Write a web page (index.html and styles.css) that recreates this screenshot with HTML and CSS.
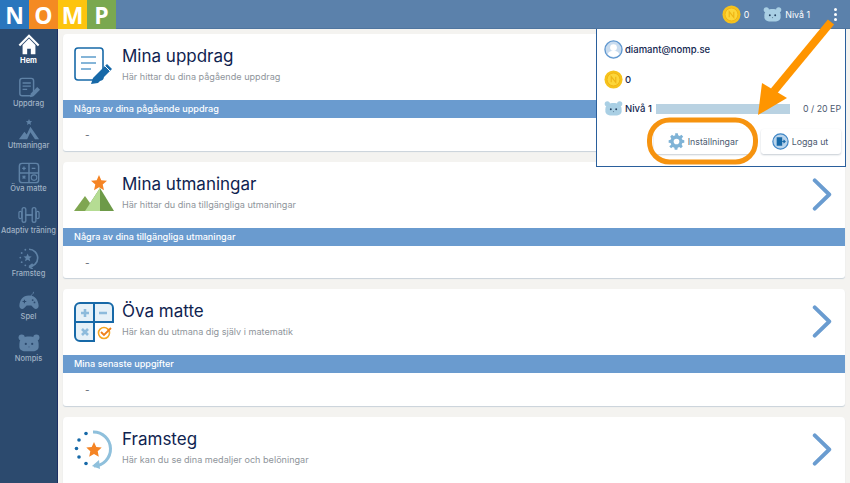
FILE: index.html
```html
<!DOCTYPE html>
<html lang="sv">
<head>
<meta charset="utf-8">
<title>NOMP</title>
<link rel="stylesheet" href="styles.css">
</head>
<body>
<svg class="defs" width="0" height="0">
  <defs>
    <g id="bear">
      <circle cx="4" cy="5" r="3.400"/><circle cx="20" cy="5" r="3.400"/>
      <path d="M1.500 12C1.500 6 7 4 12 4s10.500 2 10.500 8v3c0 3-3 5-6 5h-9c-3 0-6-2-6-5z"/>
    </g>
    <g id="coin">
      <circle cx="10" cy="10" r="9.500" fill="#f6c21c"/>
      <circle cx="10" cy="10" r="6.800" fill="#fcd63a" stroke="#f0b312" stroke-width="1"/>
      <path d="M7.600 13V7l4.800 6V7" fill="none" stroke="#efb515" stroke-width="1.200"/>
    </g>
  </defs>
</svg>
<header class="topbar">
  <div class="logo">
    <span class="logo-n">N</span><span class="logo-o">O</span><span class="logo-m">M</span><span class="logo-p">P</span>
  </div>
  <div class="top-right">
    <svg class="top-coin" viewBox="0 0 20 20"><use href="#coin"/></svg>
    <span class="top-count">0</span>
    <svg class="top-bear" viewBox="0 0 24 22"><use href="#bear" fill="#a9cfe4"/><circle cx="8.500" cy="12" r="1.200" fill="#24405f"/><circle cx="15.500" cy="12" r="1.200" fill="#24405f"/><path d="M11 15h2l-1 1z" fill="#24405f"/></svg>
    <span class="top-level">Nivå 1</span>
    <span class="dots"><i></i><i></i><i></i></span>
  </div>
</header>
<div class="frame">
  <nav class="sidebar">
    <a class="nav-item nav-active">
      <svg class="nav-icon" viewBox="0 0 24 24"><path d="M1.500 12.500 12 2l10.500 10.500" fill="none" stroke="#fff" stroke-width="2.400"/><path d="M5 12 12 5l7 7v10h-5v-6h-4v6H5z" fill="#fff"/></svg>
      <span>Hem</span>
    </a>
    <a class="nav-item">
      <svg class="nav-icon" viewBox="0 0 24 24"><rect x="2" y="1.500" width="15" height="19" rx="2.500" fill="none" stroke="#5f82a6" stroke-width="1.600"/><path d="M5 6.500h9M5 10h9M5 13.500h5" stroke="#5f82a6" stroke-width="1.500"/><path d="m13 22 1-4 7-7 3 3-7 7z" fill="#5f82a6"/></svg>
      <span>Uppdrag</span>
    </a>
    <a class="nav-item">
      <svg class="nav-icon" viewBox="0 0 24 24"><path d="m12 0 1 2.300 2.400.2-1.800 1.600.6 2.400-2.200-1.300-2.200 1.300.6-2.400-1.800-1.600 2.400-.2z" fill="#5f82a6"/><path d="m1 22 6-8 2.500 3 4-8.500 9.500 13.500h-4.500l-5-7.500-3.500 7.500z" fill="#5f82a6"/></svg>
      <span>Utmaningar</span>
    </a>
    <a class="nav-item">
      <svg class="nav-icon" viewBox="0 0 24 24"><rect x="1.500" y="1.500" width="21" height="21" rx="3" fill="none" stroke="#5f82a6" stroke-width="1.600"/><path d="M12 1.500v21M1.500 12h21" stroke="#5f82a6" stroke-width="1.600"/><path d="M4.500 7h4M6.500 5v4M15 7h4M5 15l3 3M8 15l-3 3" stroke="#5f82a6" stroke-width="1.400"/><circle cx="17.500" cy="17" r="3" fill="none" stroke="#5f82a6" stroke-width="1.200"/></svg>
      <span>Öva matte</span>
    </a>
    <a class="nav-item">
      <svg class="nav-icon" viewBox="0 0 24 24"><path d="M8 12h8" stroke="#5f82a6" stroke-width="2"/><rect x="4.500" y="4" width="4" height="16" rx="2" fill="none" stroke="#5f82a6" stroke-width="1.500"/><rect x="15.500" y="4" width="4" height="16" rx="2" fill="none" stroke="#5f82a6" stroke-width="1.500"/><rect x="1" y="8" width="3" height="8" rx="1.500" fill="none" stroke="#5f82a6" stroke-width="1.300"/><rect x="20" y="8" width="3" height="8" rx="1.500" fill="none" stroke="#5f82a6" stroke-width="1.300"/></svg>
      <span>Adaptiv träning</span>
    </a>
    <a class="nav-item">
      <svg class="nav-icon" viewBox="0 0 24 24"><path d="M12 2.500A9.500 9.500 0 0 1 12 21.500M12 21.500l4-3M12 21.500l4 2.500" fill="none" stroke="#5f82a6" stroke-width="1.800"/><path d="m10.500 7 1.300 3 3.200.3-2.400 2.100.7 3.100-2.800-1.600-2.800 1.600.7-3.100L6 10.300l3.200-.3z" fill="#5f82a6"/><g fill="#5f82a6"><circle cx="8" cy="3" r="1"/><circle cx="4" cy="6.500" r="1"/><circle cx="2.500" cy="11.500" r="1"/><circle cx="4" cy="16.500" r="1"/><circle cx="8" cy="20" r="1"/></g></svg>
      <span>Framsteg</span>
    </a>
    <a class="nav-item">
      <svg class="nav-icon" viewBox="0 0 24 24"><path d="M14 7c0-2 3-2 3-5" fill="none" stroke="#5f82a6" stroke-width="1"/><path d="M12 6C5 6 2 11 1.500 17c-.3 3 3 5 5 3l3-3h5l3 3c2 2 5.300 0 5-3C22 11 19 6 12 6z" fill="#5f82a6"/><path d="M5 12.500h4M7 10.500v4" stroke="#2c4a6e" stroke-width="1.200"/><circle cx="16" cy="11" r="1" fill="#2c4a6e"/><circle cx="18" cy="13.500" r="1" fill="#2c4a6e"/></svg>
      <span>Spel</span>
    </a>
    <a class="nav-item">
      <svg class="nav-icon" viewBox="0 0 24 22"><use href="#bear" fill="#5f82a6"/><circle cx="8.500" cy="12" r="1.200" fill="#2c4a6e"/><circle cx="15.500" cy="12" r="1.200" fill="#2c4a6e"/><path d="M11 15h2l-1 1z" fill="#2c4a6e"/></svg>
      <span>Nompis</span>
    </a>
  </nav>
  <main class="content">
    <section class="card">
      <div class="card-head">
        <svg class="card-icon" viewBox="0 0 40 40"><rect x="1" y="1" width="28" height="32" rx="3" fill="#fff" stroke="#1769a8" stroke-width="1.600"/><path d="M7 10h15M7 16h15M7 22h10" stroke="#85b5d8" stroke-width="2"/><path d="m17 37 2-6 14-14 5 5-14 14z" fill="#1769a8"/><path d="m31 19 5 5" stroke="#fff" stroke-width="1"/></svg>
        <div class="card-text">
          <h2>Mina uppdrag</h2>
          <p>Här hittar du dina pågående uppdrag</p>
        </div>
      </div>
      <div class="card-bar">Några av dina pågående uppdrag</div>
      <div class="card-body">-</div>
    </section>
    <section class="card">
      <div class="card-head">
        <svg class="card-icon" viewBox="0 0 40 40"><path d="m0 36 11-15 5 7-2 8z" fill="#7fa651"/><path d="m11 36 15-23 14 23z" fill="#6d9a48"/><path d="m11 36 15-23v23z" fill="#b5dc93"/><path d="m25 0 2.300 5.200 5.700.6-4.300 3.800 1.300 5.600-5-2.900-5 2.900 1.300-5.600L17 5.800l5.700-.6z" fill="#f58424"/></svg>
        <div class="card-text">
          <h2>Mina utmaningar</h2>
          <p>Här hittar du dina tillgängliga utmaningar</p>
        </div>
        <svg class="chevron" viewBox="0 0 20 34"><path d="m2.500 2.500 15 14.500-15 14.500" fill="none" stroke="#6a9cd0" stroke-width="4" stroke-linecap="round" stroke-linejoin="round"/></svg>
      </div>
      <div class="card-bar">Några av dina tillgängliga utmaningar</div>
      <div class="card-body">-</div>
    </section>
    <section class="card">
      <div class="card-head">
        <svg class="card-icon" viewBox="0 0 40 40"><rect x="1" y="1" width="38" height="38" rx="5" fill="#e6f1f8" stroke="#1769a8" stroke-width="2"/><path d="M20 1v38M1 20h38" stroke="#1769a8" stroke-width="2"/><rect x="21" y="21" width="19" height="19" fill="#fff"/><path d="M7 11h8M11 7v8M25 11h8M8 27l6 6M14 27l-6 6" stroke="#8dbbdc" stroke-width="2.600"/><circle cx="30" cy="31" r="5.500" fill="#fff" stroke="#f5a623" stroke-width="1.600"/><path d="m27 30 3 3 7-7" fill="none" stroke="#ef7f1a" stroke-width="1.800"/></svg>
        <div class="card-text">
          <h2>Öva matte</h2>
          <p>Här kan du utmana dig själv i matematik</p>
        </div>
        <svg class="chevron" viewBox="0 0 20 34"><path d="m2.500 2.500 15 14.500-15 14.500" fill="none" stroke="#6a9cd0" stroke-width="4" stroke-linecap="round" stroke-linejoin="round"/></svg>
      </div>
      <div class="card-bar">Mina senaste uppgifter</div>
      <div class="card-body">-</div>
    </section>
    <section class="card">
      <div class="card-head">
        <svg class="card-icon" viewBox="0 0 40 40"><path d="M19 2a17 17 0 0 1 1 34" fill="none" stroke="#8fc0dc" stroke-width="3"/><path d="m18 36 7-6 1 9z" fill="#8fc0dc"/><path d="m20 12 2.300 5 5.400.6-4 3.700 1.100 5.400-4.800-2.700-4.800 2.700 1.100-5.400-4-3.700 5.400-.6z" fill="#f58424"/><g fill="#1769a8"><circle cx="12" cy="3.500" r="1.800"/><circle cx="5" cy="10" r="1.800"/><circle cx="2.500" cy="18.500" r="1.800"/><circle cx="5" cy="27" r="1.800"/><circle cx="12" cy="33.500" r="1.800"/></g></svg>
        <div class="card-text">
          <h2>Framsteg</h2>
          <p>Här kan du se dina medaljer och belöningar</p>
        </div>
        <svg class="chevron" viewBox="0 0 20 34"><path d="m2.500 2.500 15 14.500-15 14.500" fill="none" stroke="#6a9cd0" stroke-width="4" stroke-linecap="round" stroke-linejoin="round"/></svg>
      </div>
      <div class="card-bar"></div>
    </section>
  </main>
</div>
<aside class="menu">
  <div class="menu-row">
    <svg class="menu-icon" viewBox="0 0 20 20"><circle cx="10" cy="10" r="9" fill="#c9dcef" stroke="#5f97cf" stroke-width="1.400"/><circle cx="10" cy="8" r="3.600" fill="#fff"/><path d="M3.800 15c1-3 3.500-3.800 6.200-3.800s5.200.8 6.200 3.800A8 8 0 0 1 10 18a8 8 0 0 1-6.200-3z" fill="#fff"/></svg>
    <span class="menu-label">diamant@nomp.se</span>
  </div>
  <div class="menu-row">
    <svg class="menu-icon" viewBox="0 0 20 20"><use href="#coin"/></svg>
    <span class="menu-label">0</span>
  </div>
  <div class="menu-row">
    <svg class="menu-icon menu-bear" viewBox="0 0 24 22"><use href="#bear" fill="#a9cfe4"/><circle cx="8.500" cy="12" r="1.200" fill="#24405f"/><circle cx="15.500" cy="12" r="1.200" fill="#24405f"/><path d="M11 15h2l-1 1z" fill="#24405f"/></svg>
    <span class="menu-label">Nivå 1</span>
    <span class="progress"></span>
    <span class="menu-ep">0 / 20 EP</span>
  </div>
  <div class="menu-actions">
    <button class="btn btn-settings">
      <svg class="btn-icon" viewBox="0 0 24 24"><path d="M10 1h4l.6 3 2.400 1 2.600-1.700 2.800 2.800L20 8.600l1 2.400 3 .6v3.800l-3 .6-1 2.400 1.700 2.600-2.800 2.800-2.600-1.700-2.400 1-.6 3h-4l-.6-3-2.400-1-2.600 1.700-2.800-2.800L4 18.400 3 16l-3-.6v-3.800l3-.6 1-2.400L2.300 6.100l2.800-2.800L7.700 5l2.400-1z" transform="scale(.92) translate(1 -.5)" fill="#7fb3d6"/><circle cx="12" cy="12" r="4" fill="#fff"/></svg>
      Inställningar
    </button>
    <button class="btn btn-logout">
      <svg class="btn-icon" viewBox="0 0 20 20"><circle cx="10" cy="10" r="9" fill="#b9d4ec" stroke="#3f86c6" stroke-width="1.400"/><path d="M5.500 5h6.500v10H5.500z" fill="#1769a8"/><path d="M12 10h3M13.500 8l2 2-2 2" fill="none" stroke="#1769a8" stroke-width="1.300"/></svg>
      Logga ut
    </button>
  </div>
</aside>
<svg class="annotation" viewBox="0 0 850 483" width="850" height="483">
  <path d="M831 22 774 91" stroke="#ff9500" stroke-width="8"/>
  <path d="m758 115 4-32 25 15z" fill="#ff9500"/>
  <rect x="649.500" y="120" width="106" height="42" rx="20" fill="none" stroke="#f6930f" stroke-width="5"/>
</svg>
</body>
</html>
```
FILE: styles.css
```css
* { box-sizing: border-box; }
html, body { margin: 0; height: 100%; overflow: hidden; }
body {
  position: relative;
  width: 850px;
  height: 483px;
  display: flex;
  flex-direction: column;
  background: #f4f3f0;
  font-family: Inter, "Liberation Sans", sans-serif;
  color: #12264f;
}
.defs { position: absolute; }
.topbar {
  height: 29px;
  flex: none;
  display: flex;
  justify-content: space-between;
  background: #5b81ab;
  border-bottom: 1px solid #4f759f;
}
.logo { display: flex; }
.logo span {
  width: 29px;
  height: 29px;
  display: flex;
  align-items: center;
  justify-content: center;
  color: #fff;
  font-family: "Open Sans", sans-serif;
  font-size: 23px;
  font-weight: 700;
}
.logo-n { background: #2a76bd; }
.logo-o { background: #f48a22; }
.logo-m { background: #fdc40e; }
.logo-p { background: #7aa850; }
.top-right {
  display: flex;
  align-items: center;
  color: #fff;
  font-size: 8.800px;
  padding-right: 13px;
}
.top-coin { width: 19px; height: 19px; margin-right: 3px; }
.top-count { margin-right: 14px; }
.top-bear { width: 19px; height: 17px; margin-right: 3px; }
.top-level { margin-right: 24px; }
.dots { display: flex; flex-direction: column; gap: 2px; }
.dots i { width: 3px; height: 3px; border-radius: 50%; background: #fff; }
.frame { flex: 1; display: flex; min-height: 0; }
.sidebar {
  width: 58px;
  flex: none;
  display: flex;
  flex-direction: column;
  align-items: center;
  padding-top: 5px;
  background: #2c4a6e;
  border-right: 1px solid #1c2f63;
}
.nav-item {
  height: 42.600px;
  width: 57px;
  flex: none;
  display: flex;
  flex-direction: column;
  align-items: center;
  color: #a0b2c5;
  font-size: 7.500px;
  font-weight: 500;
  line-height: 10px;
  white-space: nowrap;
}
.nav-icon { width: 22px; height: 22px; margin-bottom: 0; flex: none; }
.nav-active { color: #fff; font-weight: 700; }
.content {
  flex: 1;
  min-width: 0;
  display: flex;
  flex-direction: column;
  gap: 11px;
  padding: 5px 5px 0 5px;
  overflow: hidden;
}
.card {
  flex: none;
  background: #fff;
  border-radius: 4px 4px 3px 3px;
  box-shadow: 0 1px 1px #c9d2da;
  overflow: hidden;
}
.card-head {
  height: 66px;
  display: flex;
  align-items: center;
  padding-left: 11px;
  position: relative;
}
.card-icon { width: 40px; height: 40px; flex: none; }
.card-text { margin-left: 8px; margin-top: -7px; }
.card-text h2 {
  margin: 0;
  font-size: 17px;
  font-weight: 400;
  line-height: 22px;
  color: #0f2350;
}
.card-text p {
  margin: 4px 0 0;
  font-size: 9.100px;
  line-height: 11px;
  color: #8f959b;
}
.chevron {
  position: absolute;
  right: 13px;
  top: 16px;
  width: 20px;
  height: 33px;
}
.card-bar {
  height: 18px;
  padding-left: 11px;
  background: #6a9bcf;
  color: #fff;
  font-size: 9.100px;
  font-weight: 500;
  line-height: 18px;
}
.card-body {
  height: 32.500px;
  padding: 11px 0 0 22px;
  font-size: 10px;
  line-height: 12px;
  color: #5a6470;
}
.menu {
  position: absolute;
  left: 596px;
  top: 29px;
  width: 250px;
  height: 138px;
  display: flex;
  flex-direction: column;
  padding: 6px 4px 0 7px;
  background: #fff;
  border: 1px solid #2a5f9c;
  border-top: 0;
}
.menu-row {
  height: 29.500px;
  flex: none;
  display: flex;
  align-items: center;
  font-size: 9.500px;
  font-weight: 500;
  color: #12264f;
}
.menu-icon { width: 19px; height: 19px; margin-right: 2px; flex: none; }
.menu-bear { height: 17px; }
.progress {
  width: 134px;
  height: 10px;
  margin-left: 4px;
  background: #b9d2e2;
}
.menu-ep {
  margin-left: auto;
  font-size: 8.800px;
  font-weight: 400;
  color: #4c5a70;
}
.menu-actions {
  display: flex;
  justify-content: flex-end;
  gap: 7px;
  margin-top: 5px;
}
.btn {
  height: 25px;
  display: flex;
  align-items: center;
  justify-content: center;
  gap: 3px;
  padding: 0 2px 0 0;
  background: #fff;
  border: 0;
  border-radius: 3px;
  box-shadow: 0 1px 2px #c5ccd3;
  color: #4c5a70;
  font: 400 8.800px Inter, "Liberation Sans", sans-serif;
}
.btn-settings { width: 100px; }
.btn-logout { width: 80px; }
.btn-icon { width: 17px; height: 17px; flex: none; }
.annotation { position: absolute; left: 0; top: 0; pointer-events: none; }
```
